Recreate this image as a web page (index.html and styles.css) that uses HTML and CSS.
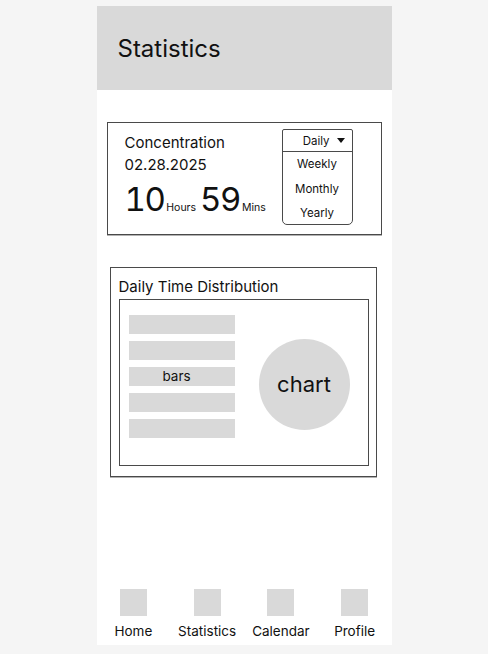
FILE: index.html
```html
<!DOCTYPE html>
<html lang="en">
<head>
    <meta charset="UTF-8">
    <meta name="viewport" content="width=device-width, initial-scale=1.0">
    <title>Statistics</title>
    <link rel="stylesheet" href="styles.css">
</head>
<body>

<div class="phone">
    <header class="app-header">
        <h1>Statistics</h1>
    </header>

    <main class="content">
        <section class="card summary">
            <div class="summary-info">
                <div class="summary-title">Concentration</div>
                <div class="summary-date">02.28.2025</div>
                <div class="summary-time">
                    <span class="time-value">10</span>
                    <span class="time-unit">Hours</span>
                    <span class="time-value">59</span>
                    <span class="time-unit">Mins</span>
                </div>
            </div>
            <div class="dropdown">
                <div class="dropdown-head">
                    <span>Daily</span>
                    <span class="caret"></span>
                </div>
                <div class="dropdown-item">Weekly</div>
                <div class="dropdown-item">Monthly</div>
                <div class="dropdown-item">Yearly</div>
            </div>
        </section>

        <section class="card distribution">
            <h2>Daily Time Distribution</h2>
            <div class="dist-box">
                <div class="bars">
                    <div class="bar"></div>
                    <div class="bar"></div>
                    <div class="bar">bars</div>
                    <div class="bar"></div>
                    <div class="bar"></div>
                </div>
                <div class="pie">chart</div>
            </div>
        </section>
    </main>

    <nav class="tab-bar">
        <div class="tab">
            <span class="tab-icon"></span>
            <span class="tab-label">Home</span>
        </div>
        <div class="tab">
            <span class="tab-icon"></span>
            <span class="tab-label">Statistics</span>
        </div>
        <div class="tab">
            <span class="tab-icon"></span>
            <span class="tab-label">Calendar</span>
        </div>
        <div class="tab">
            <span class="tab-icon"></span>
            <span class="tab-label">Profile</span>
        </div>
    </nav>
</div>

</body>
</html>
```

FILE: styles.css
```css
* {
    box-sizing: border-box;
}
body {
    margin: 0;
    padding-top: 6px;
    background-color: #f5f5f5;
    font-family: Inter, "Noto Sans", sans-serif;
    color: #111;
}
.phone {
    width: 295px;
    height: 639px;
    margin: 0 auto;
    background-color: #fff;
    display: flex;
    flex-direction: column;
}
.app-header {
    height: 84px;
    background-color: #d9d9d9;
    display: flex;
    align-items: center;
    padding-left: 21px;
}
h1 {
    margin: 0;
    font-size: 24px;
    font-weight: normal;
}
.content {
    flex: 1;
    padding-top: 32px;
}
.card {
    border: 1px solid #4a4a4a;
    box-shadow: 0 1px 0 rgba(0, 0, 0, 0.3);
}
.summary {
    margin: 0 10px;
    height: 113px;
    padding: 6px 28px 0 17px;
    display: flex;
    justify-content: space-between;
}
.summary-info {
    padding-top: 3px;
}
.summary-title,
.summary-date {
    font-size: 15px;
    line-height: 22px;
}
.summary-time {
    display: flex;
    align-items: baseline;
    margin-top: 7px;
}
.time-value {
    font-size: 33px;
    line-height: 1;
    font-variant-numeric: tabular-nums;
    letter-spacing: -1.5px;
}
.time-unit {
    font-size: 10.5px;
    margin: 0 4px 0 2px;
}
.dropdown {
    width: 71px;
    height: 96px;
    border: 1px solid #4a4a4a;
    border-radius: 2px 2px 5px 5px;
    font-size: 11.5px;
}
.dropdown-head {
    height: 22px;
    border-bottom: 1px solid #4a4a4a;
    display: flex;
    align-items: center;
    justify-content: flex-end;
    gap: 7px;
    padding-right: 7px;
}
.caret {
    width: 0;
    height: 0;
    border-left: 4.5px solid transparent;
    border-right: 4.5px solid transparent;
    border-top: 5px solid #111;
}
.dropdown-item {
    height: 24.5px;
    line-height: 24.5px;
    text-align: center;
}
.distribution {
    margin: 32px 15px 0 13px;
    height: 210px;
    padding: 0 7px 0 8px;
}
h2 {
    margin: 0;
    padding-top: 9px;
    font-size: 15px;
    font-weight: normal;
    line-height: 20px;
}
.dist-box {
    margin-top: 2px;
    height: 167px;
    border: 1px solid #4a4a4a;
    display: flex;
    justify-content: space-between;
    align-items: flex-start;
    padding: 15px 18px 0 9px;
}
.bars {
    display: flex;
    flex-direction: column;
    gap: 7px;
}
.bar {
    width: 106px;
    height: 19px;
    background-color: #d9d9d9;
    font-size: 13.5px;
    line-height: 19px;
    text-align: center;
    padding-right: 10px;
}
.pie {
    width: 91px;
    height: 91px;
    margin-top: 24px;
    border-radius: 50%;
    background-color: #d9d9d9;
    display: flex;
    align-items: center;
    justify-content: center;
    font-size: 22px;
    padding-bottom: 2px;
}
.tab-bar {
    display: grid;
    grid-template-columns: repeat(4, 1fr);
    padding-bottom: 6px;
}
.tab {
    display: flex;
    flex-direction: column;
    align-items: center;
    gap: 7px;
}
.tab-icon {
    width: 27px;
    height: 27px;
    background-color: #d9d9d9;
}
.tab-label {
    font-size: 13.5px;
    line-height: 16px;
}
```
